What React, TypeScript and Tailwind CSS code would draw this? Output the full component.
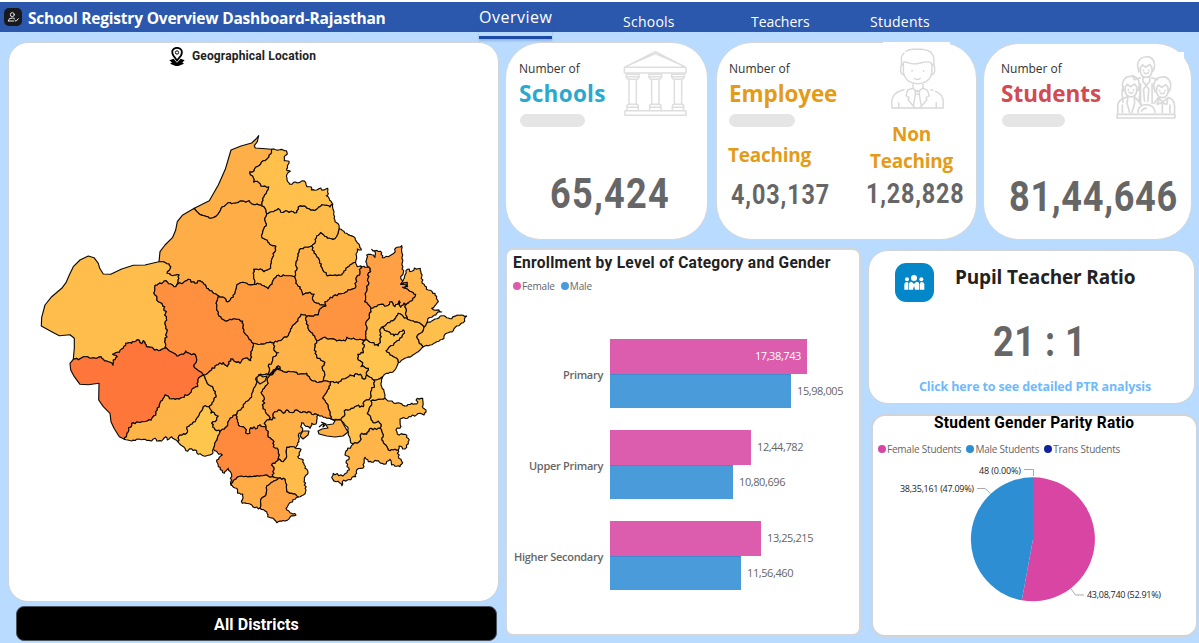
import React from "react";

/* ---------- District map ---------- */

type Point = [number, number];

const nodes: Record<string, Point> = {
  A: [271.7, 149.3], B: [194.3, 208.3], C1: [261.7, 206], C2: [266.7, 214], D: [332.7, 204],
  E: [339.3, 228.7], F: [311.7, 246], G: [355.5, 262.3], H: [294.5, 276.7], I: [254.3, 284.3],
  J: [176.7, 285], K: [218.6, 296], L: [159, 261.7], M: [166.7, 348.3], N: [73.3, 359.3],
  O: [203.3, 375], P: [124.3, 439.3], Q: [209, 406.7], R: [177.7, 441.7], S: [220, 431.7],
  T: [213.3, 449], U: [253.3, 343.3], V: [274, 342.7], W: [306.7, 316.7], X: [326, 306],
  Y: [316.7, 340.7], Z: [360.7, 266], Z2: [369.3, 267.3], AJ: [371, 308.3], TD: [365, 340],
  AO: [403, 281], AD: [404, 303.3], BD: [407.3, 319.3], DK: [381.7, 327.3], BK: [424, 327.3],
  BO: [426.7, 323.3], KD: [423.3, 346.7], KS: [398.3, 362.7], ST: [366.7, 375], SK: [374, 380],
  SO: [382.7, 376.7], TB: [330.7, 381.7], AT: [323.3, 381], AR: [268.3, 375], AB: [277.3, 369],
  BB: [330.7, 418.7], BX: [340.7, 420], KJ: [353.3, 444], KB: [380, 428.3], KO: [385, 398.3],
  BJ: [398.3, 450], PR: [235.7, 415], RU: [266, 426.7], RC: [267, 420], UC: [278.3, 458.3],
  UP: [273, 476.7], PB: [278.5, 478.3], UD: [231, 485], DO: [260, 508], BP: [298.3, 497],
  CP: [289, 447.3], BC: [318.3, 415],
};

const northTile: Point = [150, 130];
const westTile: Point = [30, 240];
const midTile: Point = [200, 260];
const eastTile: Point = [320, 240];
const southEastTile: Point = [310, 340];
const southTile: Point = [170, 360];

type Arc = [string, string, Point, string, number];

/* Borders between two nodes, in tile units of a third of a pixel; the last value is the roughness. */
const arcs: Record<string, Arc> = {
  gangTop: ["B", "A", northTile, "178,212 205,165 226,118 243,60 273,48 305,39 318,27 326,17 322,35 313,47 316,54", 0],
  hanuTop: ["A", "D", northTile, "400,60 409,62 412,72 403,80 403,92 417,94 412,108 411,122 421,124 411,133 411,150 420,163 437,156 445,158 458,152 467,158 471,170 484,171 484,180 500,180 512,174 516,181 533,175 535,191 529,197 538,206 545,218", 0.5],
  gangHanu: ["A", "C1", northTile, "362,72 350,88 340,92 332,102 317,112 312,123 300,125 308,138 311,156 322,154 333,168 356,170 350,185 338,205", 0.8],
  gangBik: ["B", "C1", northTile, "148,252 183,265 200,257 213,235 235,218 250,220 271,213 287,217 297,212 306,222 322,222", 0.5],
  c: ["C1", "C2", northTile, "345,235", 0.5],
  bikOut: ["L", "B", northTile, "30,365 45,345 68,322 77,300 82,275 97,256", 0],
  hanuChuru: ["C2", "D", northTile, "365,245 385,236 392,247 412,244 440,248 445,231 462,228 483,241 500,238 515,224 540,231", 0.7],
  churuOut: ["D", "E", northTile, "551,250 555,275 565,282", 0.4],
  jhunOut: ["E", "G", northTile, "590,310 611,320 629,347 634,360 622,357 618,372 620,385", 0.6],
  churuJhun: ["F", "E", northTile, "497,334 500,318 512,308 532,325 555,326 565,310", 0.7],
  churuSikar: ["H", "F", northTile, "440,420 437,405 445,378 448,360 463,352", 0.8],
  jhunSikar: ["F", "G", northTile, "492,370 505,384 515,412 532,438 555,435 575,435 582,423 600,405", 0.6],
  bikChuru: ["C2", "I", northTile, "344,268 349,287 340,300 336,323 352,330 364,345 378,349 368,382 362,415 342,425 336,419 311,418", 0.7],
  churuNag: ["I", "H", northTile, "332,462 355,476 367,456 380,437 410,437", 0.7],
  bikNag: ["K", "I", midTile, "70,112 83,126 100,112 106,95 111,74 128,67 145,74", 0.7],
  bikJod: ["J", "K", westTile, "460,128 475,118 495,130 503,123 521,132 530,145 545,152", 1.1],
  bikJai: ["L", "J", westTile, "400,65 417,72 422,80 411,100 428,107 447,105", 0.6],
  jaiOut: ["N", "L", westTile, "133,325 133,295 120,284 88,287 65,275 34,258 35,232 45,195 65,170 95,145 108,128 118,105 130,80 150,60 175,48 192,53 205,70 209,85 220,102 242,103 275,87 310,76 345,75 370,69", 0],
  jaiJod: ["J", "M", westTile, "432,140 422,132 408,122 385,132 374,142 375,165 385,185 404,200 409,235 405,250 411,275 406,300", 0.9],
  jaiBar: ["N", "M", westTile, "150,356 167,350 190,353 213,350 220,358 240,367 249,376 250,360 262,350 248,343 262,337 280,325 287,310 305,310 322,299 335,311 340,302 349,320 370,326 385,332", 0.8],
  barJod: ["M", "O", westTile, "440,348 460,343 467,333 480,341 495,343 500,360 491,380 505,392", 0.7],
  barOut: ["P", "N", westTile, "268,590 252,565 243,545 240,520 220,500 206,480 207,430 175,434 150,433 133,410 122,390 120,370", 0],
  barJal: ["P", "O", westTile, "290,585 305,550 335,545 363,541 378,520 390,490 405,465 425,477 447,478 480,460 490,445 503,440 503,420", 0.8],
  jodNag: ["K", "U", midTile, "50,125 50,145 57,168 75,182 105,176 128,183 131,215 145,232", 0.5],
  jodPali: ["O", "U", midTile, "30,333 50,315 70,308 82,320 92,297 105,305 120,310 135,295 152,302 153,275", 0.9],
  jalPali: ["O", "Q", westTile, "530,425 550,445 558,465 550,485", 0.7],
  jalSir: ["Q", "R", westTile, "520,500 513,515 500,535 487,552 472,560 470,580 450,585", 0.8],
  jalOut: ["R", "P", westTile, "425,590 412,600 407,590 395,603 380,603 375,595 365,603 340,598 325,597 305,603 293,600", 0.5],
  sirPali: ["Q", "S", southTile, "121,147 123,159 133,158 145,168 140,180 125,190 133,204", 0.8],
  sirUdai: ["S", "T", southTile, "142,235", 0.5],
  sirOut: ["T", "R", southTile, "125,283 110,287 85,283 80,272 60,266 53,274 45,265 32,255", 0.7],
  paliRaj: ["AR", "PR", southTile, "272,43 259,53 259,72 250,90 245,112 225,130 215,145", 0.7],
  paliUdai: ["S", "PR", southTile, "170,200 178,180 190,166", 0.5],
  paliNag: ["U", "V", midTile, "180,253 205,248", 0.5],
  paliAj: ["V", "AR", midTile, "222,270 236,278 218,295 216,307 205,318 208,335", 0.9],
  nagAj: ["V", "W", midTile, "245,240 265,227 280,195 294,183 303,163", 0.8],
  nagSik: ["H", "X", midTile, "287,70 300,80 308,105 330,97 342,103 340,122 360,135", 0.9],
  nagJp: ["X", "W", midTile, "363,145 355,165 335,168", 0.8],
  ajJp: ["W", "Y", midTile, "318,180 325,207 338,220", 0.8],
  ajTonk: ["Y", "AT", midTile, "344,265 350,290 362,300 375,307 367,325 375,345", 0.8],
  ajBhil: ["AB", "AT", midTile, "250,335 280,335 298,343 320,340 333,360 350,367", 0.7],
  bhilRaj: ["AB", "RC", southTile, "300,45 291,60 290,75 273,98 282,112 279,140 288,160 300,173", 1],
  ajRaj: ["AR", "AB", midTile, "215,345 220,330 235,318 240,326", 0.7],
  sikJp: ["X", "Z", eastTile, "15,185 40,168 62,162 90,150 108,140 108,115 120,100", 0.8],
  sikOut: ["G", "Z", eastTile, "112,80", 0.2],
  jpAlTop: ["Z", "Z2", eastTile, "135,82", 0.5],
  jpAl: ["Z2", "AJ", eastTile, "152,95 143,105 147,130 136,160 134,185", 0.9],
  jpDau: ["AJ", "TD", eastTile, "148,235 137,250 140,270", 0.7],
  jpTonk: ["Y", "TD", eastTile, "15,292 50,303 76,303 80,292 105,298", 0.7],
  alOut: ["Z2", "AO", eastTile, "140,70 140,45 160,45 165,52 165,35 155,28 185,38 187,53 205,50 218,42 232,22 245,17 248,45 246,75 250,98 242,110", 0.8],
  alBh: ["AO", "AD", eastTile, "242,133 262,127 263,140 248,142 275,155 287,163 278,180 258,195", 0.5],
  alDau: ["AJ", "AD", eastTile, "170,200 190,193 200,198 215,185 225,200 238,183 242,202", 0.9],
  bhDau: ["AD", "BD", eastTile, "258,205 258,225", 0.7],
  bhOut: ["AO", "BO", eastTile, "253,115 262,88 275,94 283,84 301,85 305,110 307,130 325,150 345,160 355,185 335,205 365,216 350,220 335,232 323,237", 0.8],
  bhKar: ["BD", "BK", eastTile, "280,243 300,250", 0.5],
  bhDh: ["BK", "BO", eastTile, "318,255", 0.2],
  dhOut: ["BO", "KD", eastTile, "345,237 367,227 390,236 412,225 440,228 430,248 410,258 400,272 375,283 372,295 350,305 330,315", 0.6],
  karDh: ["BK", "KD", eastTile, "308,275 290,290 297,305", 0.7],
  dauKar: ["DK", "BD", eastTile, "200,252 222,240 235,220 250,230", 0.7],
  dauSM: ["TD", "DK", eastTile, "155,308 175,318 184,290 180,275", 0.8],
  karSM: ["DK", "KS", eastTile, "210,278 222,288 250,270 253,280 245,292 222,310 198,332 210,345 230,355", 0.7],
  karOut: ["KD", "KS", eastTile, "295,335 275,348 250,358", 0.4],
  tonkSM: ["TD", "ST", southEastTile, "160,5 160,38 143,43 145,60 158,68 153,80 175,85", 0.9],
  tonkBun: ["TB", "ST", southEastTile, "85,130 95,118 110,113 120,105 133,110 137,101 155,108 162,118", 0.8],
  smBun: ["ST", "SK", southEastTile, "180,112", 0.5],
  smKota: ["SK", "SO", southEastTile, "205,118", 0.4],
  smOut: ["SO", "KS", southEastTile, "230,100 250,95 260,80", 0.5],
  tonkBhil: ["AT", "TB", southEastTile, "50,123", 0.5],
  bhilBun: ["TB", "BB", southEastTile, "57,145 38,175 50,190 60,215", 0.5],
  bunBot: ["BB", "BX", southEastTile, "78,238", 0.5],
  bunKota: ["BX", "SK", southEastTile, "105,225 103,213 130,205 140,198 160,200 162,185 180,175 185,150 193,135", 0.8],
  kotaOut: ["SO", "KO", southEastTile, "213,130 222,155", 0.6],
  kotaBar: ["KB", "KO", southEastTile, "214,253 205,243 190,248 183,235 172,220 185,195 183,182 205,178", 0.6],
  kotaJhal: ["KJ", "KB", southEastTile, "150,303 155,280 170,283 178,268", 0.8],
  kotaWest: ["BX", "KJ", southEastTile, "112,260 115,285 122,308", 0.6],
  barOutE: ["KO", "BJ", southEastTile, "250,188 270,190 290,198 305,190 320,192 322,175 338,175 340,205 348,210 342,225 330,220 303,230 270,237 273,260 258,270 262,282 285,283 298,300 290,322 278,327 267,318", 0.8],
  barJhal: ["KB", "BJ", southEastTile, "220,285 215,300 235,330 250,330", 0.6],
  jhalOut: ["BJ", "KJ", southEastTile, "265,350 278,368 270,380 245,375 240,358 222,373 205,362 175,365 165,352 158,385 140,390 137,410 112,420 97,425 96,437 88,428 78,425 65,412 70,400 98,408 118,390 108,368 118,352 105,345 112,330", 0.8],
  bhilChit: ["RC", "BC", southTile, "315,175 310,160 325,150 340,160 350,150 368,158 380,150 395,158 415,155 425,163", 0.9],
  bhilBot: ["BC", "BB", southTile, "470,175", 0.5],
  rajUdai: ["PR", "RU", southTile, "205,195 225,205 227,220 240,220 242,203 262,205 270,195 280,200", 0.9],
  rajChit: ["RC", "RU", southTile, "283,190", 0.6],
  udaiChit: ["RU", "UC", southTile, "293,225 308,240 310,260 322,265", 1],
  udaiPrat: ["UC", "UP", southTile, "318,305 305,315 312,330", 0.9],
  udaiDun: ["UD", "UP", southTile, "190,362 205,350 245,350 290,345 300,352", 0.5],
  udaiOut: ["T", "UD", southTile, "147,283 157,285 140,300 145,320 163,340 175,325 185,345", 0.9],
  unit: ["UP", "PB", southTile, "318,353", 0.2],
  dunBan: ["PB", "DO", southTile, "290,378 288,405 272,420", 0.6],
  dunOut: ["UD", "DO", southTile, "200,385 203,400 218,402 217,430 240,432 255,443", 0.8],
  banOut: ["DO", "BP", southTile, "290,455 293,470 310,475 320,488 345,483 360,472 378,465 360,458 348,445 358,430 375,418", 0.8],
  banPrat: ["PB", "BP", southTile, "345,358 350,375 350,395 365,400 378,405", 0.6],
  pratOut: ["CP", "BP", southTile, "372,260 393,268 383,290 400,300 405,325 414,338 403,355 408,390 400,405", 0.8],
  chitPrat: ["UC", "CP", southTile, "328,298 340,305 350,290 350,262", 0.6],
  chitOut: ["BC", "CP", southTile, "440,180 438,192 425,190 420,205 395,188 392,200 398,208 385,225 387,245 378,262", 0.7],
};

const districts: [string, string, string[]][] = [
  ["Ganganagar", "#ffaf48", ["gangTop", "gangHanu", "-gangBik"]],
  ["Hanumangarh", "#ffc04c", ["hanuTop", "-hanuChuru", "-c", "-gangHanu"]],
  ["Bikaner", "#ffad47", ["bikOut", "gangBik", "c", "bikChuru", "-bikNag", "-bikJod", "-bikJai"]],
  ["Churu", "#ffbc4b", ["hanuChuru", "churuOut", "-churuJhun", "-churuSikar", "-churuNag", "-bikChuru"]],
  ["Jhunjhunu", "#ffba4a", ["churuJhun", "jhunOut", "-jhunSikar"]],
  ["Sikar", "#ffb249", ["churuSikar", "jhunSikar", "sikOut", "-sikJp", "-nagSik"]],
  ["Jaisalmer", "#ffbd4b", ["jaiOut", "bikJai", "jaiJod", "-jaiBar"]],
  ["Jodhpur", "#ff9040", ["bikJod", "jodNag", "-jodPali", "-barJod", "-jaiJod"]],
  ["Barmer", "#ff763a", ["barOut", "jaiBar", "barJod", "-barJal"]],
  ["Nagaur", "#ff9c42", ["bikNag", "churuNag", "nagSik", "nagJp", "-nagAj", "-paliNag", "-jodNag"]],
  ["Jalore", "#ffb448", ["barJal", "jalPali", "jalSir", "jalOut"]],
  ["Sirohi", "#ffc64d", ["sirPali", "sirUdai", "sirOut", "-jalSir"]],
  ["Pali", "#ffb448", ["jodPali", "paliNag", "paliAj", "paliRaj", "-paliUdai", "-sirPali", "-jalPali"]],
  ["Ajmer", "#ffb348", ["nagAj", "ajJp", "ajTonk", "-ajBhil", "-ajRaj", "-paliAj"]],
  ["Jaipur", "#ff9440", ["sikJp", "jpAlTop", "jpAl", "jpDau", "-jpTonk", "-ajJp", "-nagJp"]],
  ["Alwar", "#ffa044", ["alOut", "alBh", "-alDau", "-jpAl"]],
  ["Dausa", "#ffbe4b", ["alDau", "bhDau", "-dauKar", "-dauSM", "-jpDau"]],
  ["Bharatpur", "#ffb449", ["bhOut", "-bhDh", "-bhKar", "-bhDau", "-alBh"]],
  ["Karauli", "#ffbb4a", ["bhKar", "karDh", "karOut", "-karSM", "dauKar"]],
  ["Dholpur", "#ffbf4c", ["bhDh", "dhOut", "-karDh"]],
  ["Sawai Madhopur", "#ffc44d", ["dauSM", "karSM", "-smOut", "-smKota", "-smBun", "-tonkSM"]],
  ["Tonk", "#ffba4a", ["jpTonk", "tonkSM", "-tonkBun", "-tonkBhil", "-ajTonk"]],
  ["Bundi", "#ffbe4b", ["tonkBun", "smBun", "-bunKota", "-bunBot", "-bhilBun"]],
  ["Kota", "#ffc04c", ["bunKota", "smKota", "kotaOut", "-kotaBar", "-kotaJhal", "-kotaWest"]],
  ["Baran", "#ffbc4b", ["kotaBar", "barOutE", "-barJhal"]],
  ["Jhalawar", "#ffb54a", ["kotaJhal", "barJhal", "jhalOut"]],
  ["Bhilwara", "#ffa044", ["ajBhil", "tonkBhil", "bhilBun", "-bhilBot", "-bhilChit", "-bhilRaj"]],
  ["Rajsamand", "#ffb649", ["ajRaj", "bhilRaj", "rajChit", "-rajUdai", "-paliRaj"]],
  ["Chittorgarh", "#ffb047", ["bhilChit", "chitOut", "-chitPrat", "-udaiChit", "-rajChit"]],
  ["Udaipur", "#ff8a3e", ["paliUdai", "rajUdai", "udaiChit", "udaiPrat", "-udaiDun", "-udaiOut", "-sirUdai"]],
  ["Pratapgarh", "#ffbc4b", ["chitPrat", "pratOut", "-banPrat", "-unit", "-udaiPrat"]],
  ["Dungarpur", "#ffab46", ["udaiDun", "unit", "dunBan", "-dunOut"]],
  ["Banswara", "#ffa345", ["banPrat", "-banOut", "-dunBan"]],
];

function tracePoints(arc: Arc, seedStart: number): Point[] {
  const [from, to, tile, list, roughness] = arc;
  const middle = list.split(" ").map((pair): Point => {
    const [x, y] = pair.split(",").map(Number);
    return [tile[0] + x / 3, tile[1] + y / 3];
  });
  const corners = [nodes[from], ...middle, nodes[to]];
  let seed = seedStart;
  const next = () => {
    seed = (seed * 1103515245 + 12345) % 2147483648;
    return seed / 2147483648 - 0.5;
  };
  const result: Point[] = [corners[0]];
  for (let i = 1; i < corners.length; i++) {
    const [x0, y0] = corners[i - 1];
    const [x1, y1] = corners[i];
    const length = Math.hypot(x1 - x0, y1 - y0) || 1;
    const steps = roughness ? Math.max(1, Math.round(length / 1.8)) : 1;
    for (let s = 1; s < steps; s++) {
      const t = s / steps;
      const shift = next() * roughness * 2.6;
      result.push([
        x0 + (x1 - x0) * t - ((y1 - y0) / length) * shift,
        y0 + (y1 - y0) * t + ((x1 - x0) / length) * shift,
      ]);
    }
    result.push(corners[i]);
  }
  return result;
}

const traced: Record<string, Point[]> = {};
Object.keys(arcs).forEach((key, index) => {
  traced[key] = tracePoints(arcs[key], 97 + index * 7919);
});

function outline(keys: string[]): string {
  const points = keys.flatMap((key) => (key[0] === "-" ? [...traced[key.slice(1)]].reverse() : traced[key]));
  return "M" + points.map((p) => p[0].toFixed(1) + " " + p[1].toFixed(1)).join("L") + "Z";
}

function DistrictMap() {
  return (
    <svg viewBox="30 125 450 410" width="450" height="410" className="block" role="img">
      <g stroke="#0d0a05" strokeWidth="1.15" strokeLinejoin="round">
        {districts.map(([name, fill, keys]) => (
          <path key={name} d={outline(keys)} fill={fill} />
        ))}
        <path d="M331 419L336 420L341 420L345 427L348 432L343 436L335 437L327 436L319 434L318 431L322 429L328 428L326 425L333 424L335 421Z" fill="#ffb047" />
        <path d="M301 434L303 431L309 431L308 435L303 439L300 436Z" fill="#ffb047" />
        <path d="M257 377L260 375L263 377L267 376L265 381L260 384L257 381Z" fill="#ffb649" />
        <path d="M269 375L273 371L278 367M272 374L277 369M319 427L324 423L323 427L326 424L321 422M401 284L407 285L404 288" fill="none" strokeWidth="1.2" />
      </g>
    </svg>
  );
}

/* ---------- Icons ---------- */

function SchoolIcon() {
  return (
    <svg viewBox="370 45 195 201" width="65" height="67" fill="none" stroke="#dedede" strokeWidth="4.5" strokeLinejoin="round">
      <path d="M374 97L467 50L559 97V114H374ZM374 97H559M388 90L467 56L546 90" />
      {[380, 448, 516].map((x) => (
        <g key={x}>
          <path d={`M${x} 118H${x + 38}V126Q${x + 36} 132 ${x + 31} 133H${x + 7}Q${x + 2} 132 ${x} 126ZM${x} 125H${x + 38}`} />
          <path d={`M${x + 8} 133V208M${x + 30} 133V208M${x + 2} 225V214Q${x + 2} 208 ${x + 8} 208H${x + 30}Q${x + 36} 208 ${x + 36} 214V225M${x + 2} 217H${x + 36}`} />
        </g>
      ))}
      <path d="M376 227H559V241H376Z" />
    </svg>
  );
}

function EmployeeIcon() {
  return (
    <svg viewBox="525 33 165 190" width="55" height="63" fill="none" stroke="#d8d8d8" strokeWidth="4.2" strokeLinecap="round" strokeLinejoin="round">
      <path d="M559 84V66Q560 57 567 51M573 46Q582 40 594 40H622Q657 43 657 72V84" />
      <path d="M565 85V79C574 75 579 84 596 84C615 84 636 72 647 80L651 85V104C651 128 634 143 608 144C582 143 565 128 565 104Z" />
      <path d="M565 85Q557 85 557 94V108Q558 115 567 117M651 85Q659 85 659 94V108Q658 115 649 117M591 104V106M626 104V106M598 128Q608 135 616 127" />
      <path d="M594 145V158L607 168L624 157V145M594 158L578 162L573 180L582 185L579 192L600 217M624 157L637 163L643 180L633 186L636 192L614 217" />
      <path d="M600 165L601 176L596 207M614 165L613 176L618 207M601 176H613M607 169V164" />
      <path d="M530 217V196Q533 172 557 165L567 162M530 217H685V196Q683 175 662 167M648 162L654 164M551 201V216M664 201V216" />
    </svg>
  );
}

function StudentHead({ x, y, long }: { x: number; y: number; long?: boolean }) {
  return (
    <g transform={`translate(${x} ${y})`}>
      <path d="M-17 3C-20 25-12 34 0 34S20 25 17 3L11-5-2 3-11-4ZM-23 10C-31-8-21-27-3-28C17-33 31-13 23 11L19 16M-23 10V17M-8 12V14M8 12V14M-6 20Q0 25 6 20" />
      {long && <path d="M-23 3C-34 25-22 35-25 50M23 3C34 25 22 35 25 50" />}
    </g>
  );
}

function StudentsIcon() {
  return (
    <svg viewBox="405 58 187 197" width="62" height="65" fill="none" stroke="#d9d9d9" strokeWidth="5" strokeLinecap="round" strokeLinejoin="round">
      <StudentHead x={499} y={92} />
      <StudentHead x={453} y={151} long />
      <StudentHead x={548} y={153} />
      <path d="M482 127L463 133L458 120M516 127L534 133M489 126V138L499 150L510 138V126M482 145V208M517 145V205M499 150L491 162L494 198M499 150L507 162L504 198" />
      <path d="M413 234V209Q415 194 434 188L444 184M463 184L484 207M444 184L441 204L449 232M463 184L464 204L456 232M427 210V232M523 205L536 187L549 201L565 187Q583 190 585 211V234M538 193L532 207L548 203L561 208L564 194M571 210V232M548 203V232M474 232Q475 209 499 208Q524 210 526 232M485 228Q492 218 499 219" />
      <path d="M411 238H586V249H411Z" />
    </svg>
  );
}

/* ---------- Panels ---------- */

function Header() {
  return (
    <header className="flex h-8 w-full items-start border-t-2 border-white bg-[#2b58ac] text-white">
      <div className="flex h-[30px] w-[479px] items-center pl-1">
        <svg viewBox="0 0 54 54" width="18" height="18" fill="none">
          <rect width="54" height="54" rx="15" fill="#17191c" />
          <g stroke="#e8e8e8" strokeWidth="3" strokeLinecap="round">
            <circle cx="25" cy="20" r="6" />
            <path d="M13 38Q14 29 25 30L31 31M13 39H29M32 36L36 40L43 32" />
          </g>
        </svg>
        <h1 className="ml-1.5 pt-px text-[15.5px] leading-[30px] font-bold whitespace-nowrap tracking-[-0.2px]">
          School Registry Overview Dashboard-Rajasthan
        </h1>
      </div>
      <nav className="flex items-start text-[14px] leading-5 whitespace-nowrap">
        <a className="h-[37px] w-[73px] border-b-[3px] border-[#1d4aa6] text-[16px] leading-[31px] tracking-[0.5px] shadow-[0_2px_2px_rgba(40,80,140,0.25)]">Overview</a>
        <a className="mt-2.5 ml-[71px] w-[52px] tracking-[0.25px]">Schools</a>
        <a className="mt-2.5 ml-[76px] w-[58px] tracking-[-0.05px]">Teachers</a>
        <a className="mt-2.5 ml-[61px] w-[60px] tracking-[0.25px]">Students</a>
      </nav>
    </header>
  );
}

function CardHeading({ label, color, bar }: { label: string; color: string; bar: string }) {
  return (
    <div>
      <p className="text-[12px] leading-4 text-[#333]">Number of</p>
      <h2 className={`mt-[2px] text-[22.5px] leading-[30px] font-bold ${color}`}>{label}</h2>
      <div className={`mt-[5px] h-[13px] rounded-full bg-[#e5e5e5] ${bar}`} />
    </div>
  );
}

const digits = "font-['Roboto'] font-bold text-[#666] whitespace-nowrap";

function SummaryCards() {
  return (
    <div className="flex items-start">
      <section className="flex h-[198px] w-[203px] flex-col rounded-[36px] border border-[#d3d6da] bg-white">
        <div className="flex items-start justify-between pt-[18px] pr-[19px] pl-[13px]">
          <CardHeading label="Schools" color="text-[#29a9cf] tracking-[0.3px]" bar="ml-px w-[65px]" />
          <div className="-mt-[11px]"><SchoolIcon /></div>
        </div>
        <p className={`mt-[41px] pl-[44px] text-[43px] leading-[50px] ${digits}`}>
          <span className="inline-block origin-left scale-x-[0.84] tracking-[1.5px]">65,424</span>
        </p>
      </section>
      <section className="relative ml-2 flex h-[198px] w-[261px] flex-col rounded-[36px] border border-[#d3d6da] bg-white">
        <span className="absolute -top-px left-[166px] h-3 w-[67px] bg-white" />
        <div className="relative flex items-start justify-between pt-[18px] pr-[31px] pl-3">
          <CardHeading label="Employee" color="text-[#e49b18] tracking-[-0.1px]" bar="w-[66px]" />
          <div className="-mt-[14px]"><EmployeeIcon /></div>
        </div>
        <div className="-mt-[6px] flex justify-between">
          <div className="w-[130px] pt-[21px] pl-[11px]">
            <h3 className="text-[19px] leading-[26px] font-bold tracking-[-0.25px] text-[#e49b18]">Teaching</h3>
            <p className={`mt-[10px] pl-[3px] text-[28.5px] leading-[34px] ${digits}`}>
              <span className="inline-block origin-left scale-x-[0.82] tracking-[1.1px]">4,03,137</span>
            </p>
          </div>
          <div className="flex w-[130px] flex-col items-center">
            <h3 className="text-center text-[19px] leading-[27px] font-bold tracking-[-0.25px] text-[#e49b18]">Non<br />Teaching</h3>
            <p className={`mt-[2px] w-[110px] pl-[9px] text-[28.5px] leading-[34px] ${digits}`}>
              <span className="inline-block origin-left scale-x-[0.82] tracking-[1px]">1,28,828</span>
            </p>
          </div>
        </div>
      </section>
      <section className="relative mt-px ml-[6px] flex h-[197px] w-[209px] flex-col rounded-[36px] border border-[#d3d6da] bg-white">
        <span className="absolute top-2 left-[185px] h-5 w-[15px] bg-white" />
        <div className="relative flex items-start justify-between pt-[17px] pr-[14px] pl-[17px]">
          <CardHeading label="Students" color="text-[#d24a53]" bar="ml-px w-[63px]" />
          <div className="-mt-[6px]"><StudentsIcon /></div>
        </div>
        <p className={`mt-[44px] pl-[25px] text-[43px] leading-[50px] ${digits}`}>
          <span className="inline-block origin-left scale-x-[0.84] tracking-[0.8px]">81,44,646</span>
        </p>
      </section>
    </div>
  );
}

const levels = [
  { name: "Primary", female: ["17,38,743", 197], male: ["15,98,005", 181], inside: true },
  { name: "Upper Primary", female: ["12,44,782", 141], male: ["10,80,696", 123], inside: false },
  { name: "Higher Secondary", female: ["13,25,215", 151], male: ["11,56,460", 131], inside: false },
] as const;

function LegendDot({ color, label }: { color: string; label: string }) {
  return (
    <span className="flex items-center">
      <span className={`mr-px size-2 rounded-full ${color}`} />
      {label}
    </span>
  );
}

function EnrollmentChart() {
  return (
    <section className="h-[388px] w-[356px] rounded-lg border-2 border-[#d3d6da] bg-white">
      <h2 className="mt-[3px] pl-[6px] font-['Roboto'] text-[16.5px] leading-[19px] font-bold whitespace-nowrap text-[#222]">
        <span className="inline-block origin-left scale-x-[0.94] tracking-[0.3px]">Enrollment by Level of Category and Gender</span>
      </h2>
      <div className="mt-[6px] flex gap-1.5 pl-[6px] text-[10px] leading-4 tracking-[-0.15px] text-[#666]">
        <LegendDot color="bg-[#dc5cad]" label="Female" />
        <LegendDot color="bg-[#4a9bd9]" label="Male" />
      </div>
      <div className="mt-[45px] flex flex-col gap-[22px]">
        {levels.map((level) => (
          <div key={level.name} className="flex h-[69px] items-center">
            <p className="w-[103px] pt-[3px] pr-[7px] text-right text-[11px] leading-4 font-semibold whitespace-nowrap tracking-[-0.3px] text-[#666]">{level.name}</p>
            <div className="text-[11px] tracking-[-0.4px] text-[#666]">
              <div className="flex items-center">
                <div className="flex h-[34.5px] items-center justify-end bg-[#dc5cad] pr-1.5 text-white" style={{ width: level.female[1] }}>
                  {level.inside && level.female[0]}
                </div>
                {!level.inside && <span className="pl-1.5">{level.female[0]}</span>}
              </div>
              <div className="flex items-center">
                <div className="h-[34.5px] border-t border-[#4387cf] bg-[#4a9bd9]" style={{ width: level.male[1] }} />
                <span className="pl-1.5">{level.male[0]}</span>
              </div>
            </div>
          </div>
        ))}
      </div>
    </section>
  );
}

function PupilTeacherCard() {
  return (
    <section className="h-[154px] w-[327px] rounded-[20px] border border-[#d0d3d8] bg-white">
      <div className="flex pt-3 pl-[26px]">
        <svg viewBox="0 0 117 117" width="39" height="39" fill="#fff">
          <rect width="117" height="117" rx="34" fill="#0487c8" />
          <circle cx="57" cy="45" r="9" />
          <circle cx="36" cy="49" r="6" />
          <circle cx="79" cy="49" r="6" />
          <path d="M42 80V63Q43 56 50 56L57 63L64 56Q72 56 73 63V80H60L57 68L54 80ZM28 80V63Q29 57 37 57L40 60V80ZM88 80V63Q87 57 79 57L75 60V80Z" />
        </svg>
        <h2 className="-mt-px ml-[21px] text-[19px] leading-[30px] font-bold whitespace-nowrap tracking-[-0.17px] text-[#222]">Pupil Teacher Ratio</h2>
      </div>
      <p className={`mt-[14px] pl-[124px] text-[43px] leading-[50px] ${digits}`}>
        <span className="inline-block origin-left scale-x-[0.84] tracking-[0.6px]">21 : 1</span>
      </p>
      <a className="mt-[11px] block pl-[50px] text-[12.5px] leading-5 font-bold whitespace-nowrap tracking-[-0.13px] text-[#70b9fd]">
        Click here to see detailed PTR analysis
      </a>
    </section>
  );
}

function GenderParityCard() {
  return (
    <section className="mt-[10px] ml-[3px] h-[223px] w-[327px] rounded-[14px] border-2 border-[#d0d3d8] bg-white">
      <h2 className="-mt-[2px] pl-[61px] font-['Roboto'] text-[16.5px] leading-[18px] font-bold whitespace-nowrap text-black">
        <span className="inline-block origin-left scale-x-[0.94] tracking-[0.25px]">Student Gender Parity Ratio</span>
      </h2>
      <div className="mt-[9px] flex gap-[5px] pl-[5px] text-[10px] leading-4 tracking-[-0.22px] whitespace-nowrap text-[#666]">
        <LegendDot color="bg-[#d845a3]" label="Female Students" />
        <LegendDot color="bg-[#2d8ed4]" label="Male Students" />
        <LegendDot color="bg-[#12239e]" label="Trans Students" />
      </div>
      <svg viewBox="873 457 322 165" width="322" height="165" className="block text-[9px]" fill="#252423">
        <path d="M1033 539.3V477.3A62 62 0 1 1 1021.8 600.3Z" fill="#d845a3" />
        <path d="M1033 539.3L1021.8 600.3A62 62 0 0 1 1033 477.3Z" fill="#2d8ed4" />
        <path d="M1024 469.5H1033.5V476M977 488.5H985L990.5 493.5M1071 589L1075.5 595H1084" fill="none" stroke="#aaa" />
        <text x="979" y="474" textLength="42">48 (0.00%)</text>
        <text x="900" y="492" textLength="74">38,35,161 (47.09%)</text>
        <text x="1087" y="598" textLength="74">43,08,740 (52.91%)</text>
      </svg>
    </section>
  );
}

export default function App() {
  return (
    <div className="flex h-[643px] w-[1199px] flex-col overflow-hidden bg-[#b8dbff] font-['Open_Sans','Noto_Sans',sans-serif]">
      <Header />
      <main className="flex items-start pl-2">
        <div className="pt-2.5">
          <section className="h-[560px] w-[491px] rounded-[20px] border border-[#d0d3d8] bg-white">
            <div className="flex h-[26px] items-center pl-[160px]">
              <svg viewBox="505 136 48 56" width="16" height="19">
                <path d="M506 175L519 171L529 183L540 171L552 175L545 182L550 186L529 194L508 186L514 182Z" fill="#000" />
                <path d="M529 176L518 161C511 149 516 138 529 138S547 149 541 161Z" fill="#fff" stroke="#000" strokeWidth="5.5" />
                <circle cx="529" cy="152" r="5" fill="#fff" stroke="#000" strokeWidth="3" />
              </svg>
              <h2 className="ml-[7px] font-['Roboto'] text-[12.5px] font-bold whitespace-nowrap text-[#222]">
                <span className="inline-block origin-left scale-x-[0.96] tracking-[0.15px]">Geographical Location</span>
              </h2>
            </div>
            <div className="mt-[56px] ml-[21px]"><DistrictMap /></div>
          </section>
          <button className="mt-1 ml-2 block h-[35px] w-[481px] rounded-lg border border-[#4a545e] bg-black pt-0.5 text-center font-['Roboto'] text-[16px] font-bold text-white">
            <span className="inline-block tracking-[0.1px]">All Districts</span>
          </button>
        </div>
        <div className="mt-2.5 ml-[6px]">
          <SummaryCards />
          <div className="mt-2 flex items-start">
            <EnrollmentChart />
            <div className="mt-[2px] ml-[7px]">
              <PupilTeacherCard />
              <GenderParityCard />
            </div>
          </div>
        </div>
      </main>
    </div>
  );
}
